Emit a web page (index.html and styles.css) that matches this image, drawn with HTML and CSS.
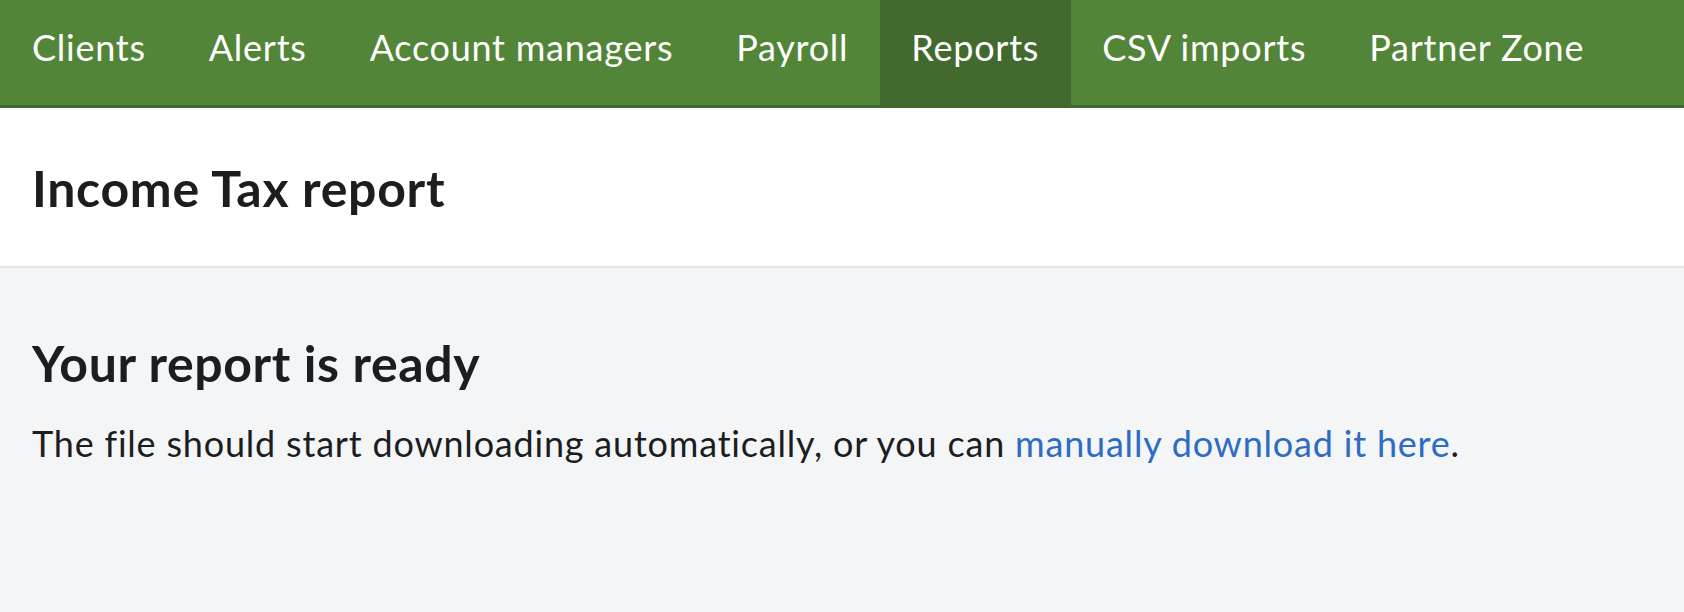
FILE: index.html
```html
<!DOCTYPE html>
<html lang="en">
<head>
    <meta charset="UTF-8">
    <meta name="viewport" content="width=device-width, initial-scale=1.0">
    <title>Income Tax report</title>
    <link rel="stylesheet" href="styles.css">
</head>
<body>

<div class="navbar">
    <a href="/clients">Clients</a>
    <a href="/alerts">Alerts</a>
    <a href="/account-managers">Account managers</a>
    <a href="/payroll">Payroll</a>
    <a href="/reports" class="active">Reports</a>
    <a href="/csv-imports">CSV imports</a>
    <a href="/partner-zone">Partner Zone</a>
</div>

<div class="page-header">
    <h1>Income Tax report</h1>
</div>

<div class="content">
    <h2>Your report is ready</h2>
    <p>The file should start downloading automatically, or you can <a href="/reports/income-tax/download">manually download it here</a>.</p>
</div>

</body>
</html>
```

FILE: styles.css
```css
body {
    font-family: Lato, "Noto Sans", sans-serif;
    background-color: #f4f5f7;
    color: #1c1d1f;
    margin: 0;
}

.navbar {
    display: flex;
    background-color: #538538;
    border-bottom: 3px solid #3e682c;
}

.navbar a {
    display: block;
    box-sizing: border-box;
    height: 105px;
    padding: 26px 31.5px 0;
    font-size: 36px;
    line-height: 1.2;
    letter-spacing: 0.75px;
    color: #fff;
    text-decoration: none;
}

.navbar a:first-child {
    padding-left: 32px;
}

.navbar a.active {
    background-color: #426a2e;
}

.page-header {
    background-color: #fff;
    padding: 50px 32px 48px;
    border-bottom: 2px solid #e3e5ea;
}

h1 {
    margin: 0;
    font-size: 50px;
    line-height: 1.2;
    font-weight: 700;
    letter-spacing: 0.7px;
}

.content {
    padding: 65px 32px 40px;
}

h2 {
    margin: 0 0 23px;
    font-size: 50px;
    line-height: 1.2;
    font-weight: 700;
    letter-spacing: 0.6px;
}

p {
    margin: 0;
    font-size: 36px;
    line-height: 1.5;
    letter-spacing: 0.8px;
}

p a {
    color: #2d6bc4;
    text-decoration: none;
}

p a:hover {
    text-decoration: underline;
}
```
